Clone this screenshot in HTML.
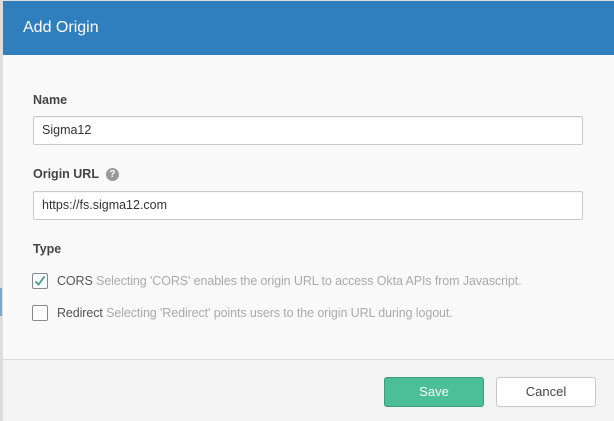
<!DOCTYPE html>
<html><head><style>
body{margin:0;width:614px;height:420px;overflow:hidden;background:#ddd;font-family:"Liberation Sans",sans-serif;position:relative}
.dlg{position:absolute;left:3px;top:1px;width:611px;height:419px;background:#f9f9f9}
.hd{position:absolute;left:0;top:0;width:611px;height:54px;background:#2f7fbf;color:#fff;font-size:16px;line-height:54px;text-indent:20px;font-weight:300}
.lbl{position:absolute;left:30px;font-size:12.5px;font-weight:bold;color:#444}
.inp{position:absolute;left:30px;width:548px;height:27px;border:1px solid #c8c8c8;border-radius:2px;background:#fff;font-size:12.5px;line-height:27px;text-indent:8px;color:#333;box-shadow:inset 0 1px 1px rgba(0,0,0,.05)}
.help{display:inline-block;width:13px;height:13px;border-radius:50%;background:#999;color:#fff;font-size:10px;line-height:13px;text-align:center;margin-left:7px;vertical-align:1px}
.cb{position:absolute;left:29px;width:14px;height:14px;border:1px solid #888;border-radius:2px;background:#fff}
.ct{position:absolute;left:54px;font-size:12.5px;color:#555;letter-spacing:-0.1px}
.ct span{color:#aaa}
.ft{position:absolute;left:0;top:358px;width:611px;height:61px;background:#f3f3f3;border-top:1px solid #ddd}
.btn{position:absolute;top:17px;width:98px;height:28px;border-radius:3px;font-size:13px;line-height:28px;text-align:center}
</style></head><body>
<div style="position:absolute;left:0;top:288px;width:2px;height:28px;background:#7aa7cc"></div>
<div class="dlg">
<div class="hd">Add Origin</div>
<div class="lbl" style="top:92px">Name</div>
<div class="inp" style="top:115px">Sigma12</div>
<div class="lbl" style="top:166px">Origin URL<span class="help">?</span></div>
<div class="inp" style="top:190px">https://fs.sigma12.com</div>
<div class="lbl" style="top:241px">Type</div>
<div class="cb" style="top:272px"><svg width="14" height="14" viewBox="0 0 14 14"><path d="M2.5 7.5 L5.5 10.5 L11.5 2.5" fill="none" stroke="#3aa57d" stroke-width="1.8"/></svg></div>
<div class="ct" style="top:273px">CORS <span>Selecting 'CORS' enables the origin URL to access Okta APIs from Javascript.</span></div>
<div class="cb" style="top:304px"></div>
<div class="ct" style="top:305px">Redirect <span>Selecting 'Redirect' points users to the origin URL during logout.</span></div>
<div class="ft">
<div class="btn" style="left:381px;background:#4cbf99;border:1px solid #3a9c7c;color:#fff">Save</div>
<div class="btn" style="left:493px;background:#fff;border:1px solid #c8c8c8;color:#444">Cancel</div>
</div>
</div>
</body></html>
